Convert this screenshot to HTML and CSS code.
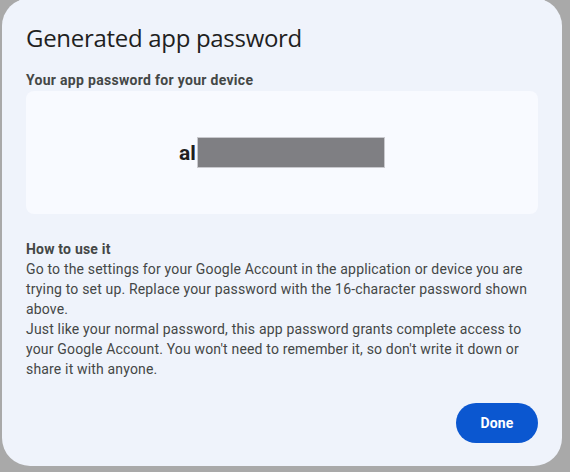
FILE: index.html
```html
<!DOCTYPE html>
<html>
<head>
<meta charset="utf-8">
<link rel="stylesheet" href="styles.css">
</head>
<body>
<div class="scrim">
  <div class="dialog">
    <h1 class="title">Generated app password</h1>
    <div class="label">Your app password for your device</div>
    <div class="pwbox">
      <span class="pw">al</span><span class="redact"></span>
    </div>
    <div class="howto">
      <div class="howto-title">How to use it</div>
      <p class="para">Go to the settings for your Google Account in the application or device you are trying to set up. Replace your password with the 16-character password shown above.</p>
      <p class="para">Just like your normal password, this app password grants complete access to your Google Account. You won't need to remember it, so don't write it down or share it with anyone.</p>
    </div>
    <div class="actions">
      <button class="done">Done</button>
    </div>
  </div>
</div>
</body>
</html>
```

FILE: styles.css
```css
html, body {
  margin: 0;
  padding: 0;
  background: #a9a9a9;
  width: 570px;
  height: 472px;
  overflow: hidden;
}
.scrim {
  padding-left: 2px;
}
.dialog {
  box-sizing: border-box;
  width: 560px;
  height: 468px;
  margin-top: -2px;
  background: #eff3fb;
  border-radius: 28px;
  padding: 24px 24px 23px 24px;
  display: flex;
  flex-direction: column;
  font-family: Roboto, "Liberation Sans", sans-serif;
}
.title {
  margin: 0;
  font-family: "Open Sans", Roboto, sans-serif;
  font-weight: 400;
  font-size: 24px;
  line-height: 32px;
  letter-spacing: -0.3px;
  color: #1f1f1f;
}
.label {
  margin-top: 16px;
  font-size: 14px;
  line-height: 20px;
  font-weight: 700;
  letter-spacing: 0.3px;
  color: #444746;
}
.pwbox {
  margin-top: 1px;
  height: 123px;
  background: #f8faff;
  border-radius: 8px;
  display: flex;
  align-items: center;
  justify-content: center;
}
.pw {
  font-size: 21px;
  font-weight: 700;
  color: #1f1f1f;
  line-height: 30px;
}
.redact {
  display: inline-block;
  box-sizing: border-box;
  width: 188px;
  height: 31px;
  background: #7f7f83;
  border: 1px solid #c9c9ce;
  margin-left: 1px;
  margin-top: -1px;
}
.howto {
  margin-top: 25px;
  font-size: 14px;
  line-height: 20px;
  letter-spacing: 0.17px;
  color: #444746;
}
.howto-title {
  font-weight: 700;
  letter-spacing: 0.2px;
}
.para {
  margin: 0;
}
.actions {
  margin-top: auto;
  display: flex;
  justify-content: flex-end;
}
.done {
  width: 82px;
  height: 40px;
  border: none;
  border-radius: 20px;
  background: #0b57d0;
  color: #ffffff;
  font-family: Roboto, "Liberation Sans", sans-serif;
  font-size: 14px;
  font-weight: 700;
  letter-spacing: 0.2px;
  padding: 0;
}
```
